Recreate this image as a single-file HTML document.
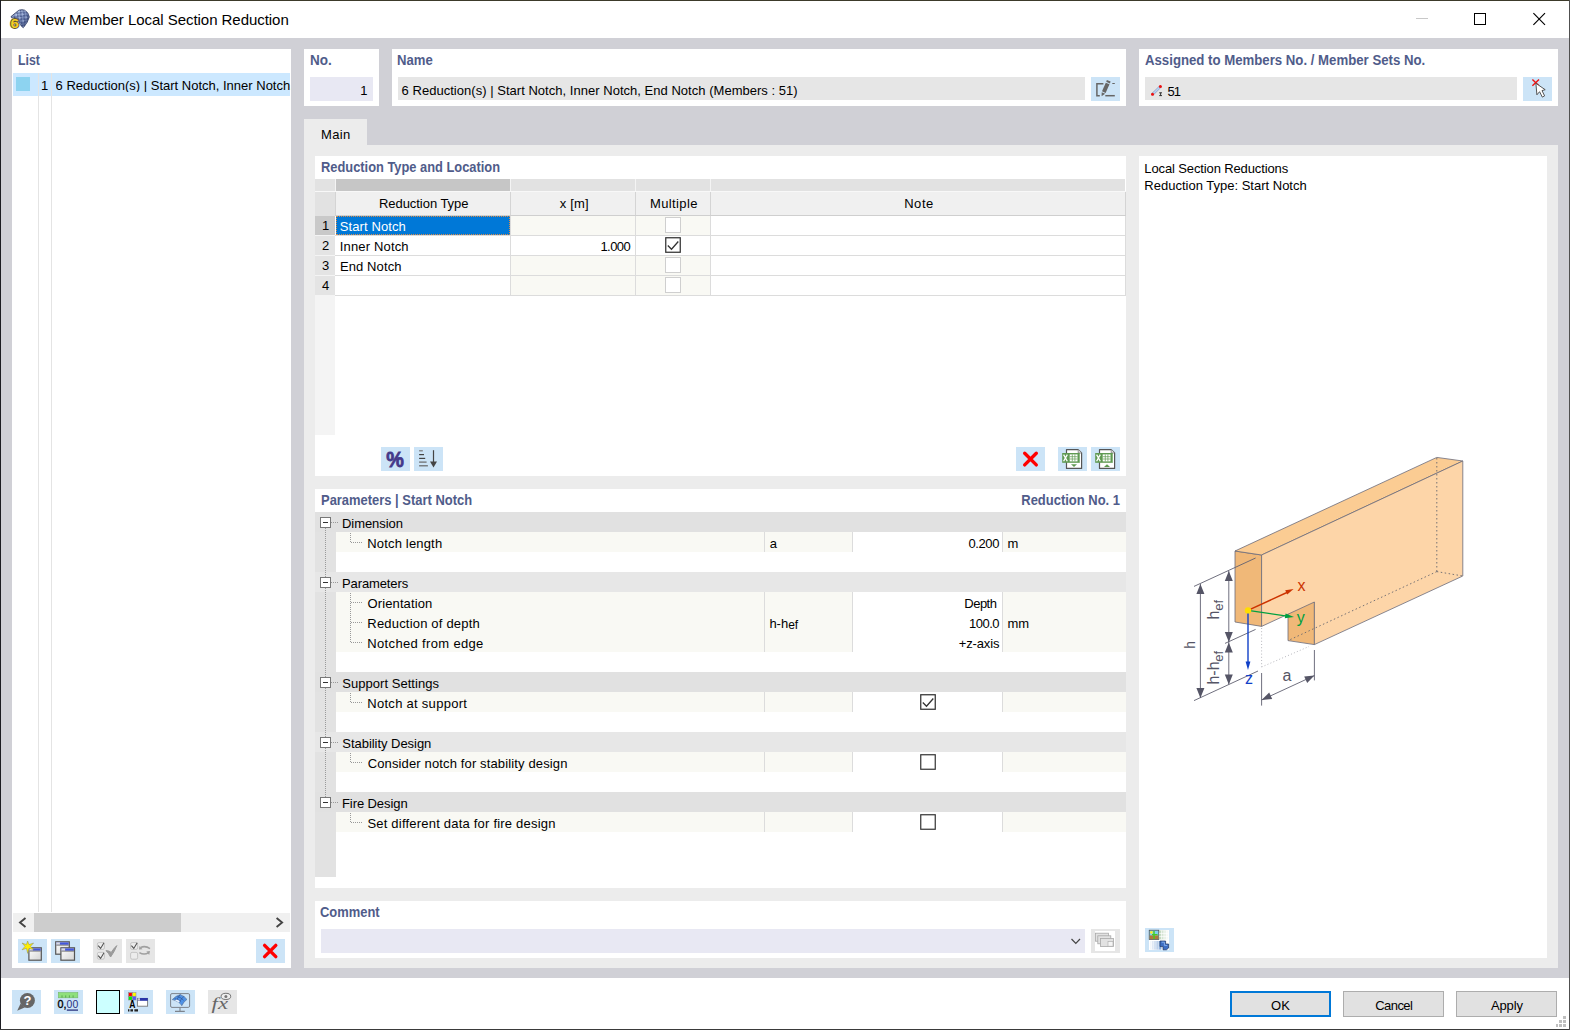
<!DOCTYPE html>
<html lang="en"><head><meta charset="utf-8"><title>New Member Local Section Reduction</title>
<style>
html,body{margin:0;padding:0;background:#fff;}
body{width:1570px;height:1030px;position:relative;overflow:hidden;font-family:"Liberation Sans", sans-serif;}
#w{position:absolute;left:0;top:0;width:1570px;height:1030px;overflow:hidden;}
#w>div,#w>svg,#w>span{position:absolute;}
.t{white-space:nowrap;line-height:1;display:block;}
svg text{font-family:"Liberation Sans", sans-serif;}
</style></head><body><div id="w">
<div style="left:0px;top:0px;width:1570px;height:1030px;background:#ffffff;"></div>
<div style="left:0px;top:38px;width:1570px;height:940px;background:#d0d0d6;"></div>
<div style="left:0px;top:0px;width:1570px;height:1px;background:#3c3a2a;"></div>
<div style="left:0px;top:0px;width:1px;height:1030px;background:#1c1c22;"></div>
<div style="left:0px;top:1029px;width:1570px;height:1px;background:#3a3a3a;"></div>
<div style="left:1569px;top:0px;width:1px;height:1030px;background:#505050;"></div>
<span id="title" class="t" style="top:12.30px;font-size:15px;font-weight:400;color:#000;letter-spacing:-0.044px;left:35.08px;"><span>New Member Local Section Reduction</span></span>
<div style="left:12px;top:49px;width:279px;height:919px;background:#fff;"></div>
<span id="list" class="t" style="top:53.15px;font-size:14px;font-weight:700;color:#505c8a;letter-spacing:0.000px;left:17.950000000000003px;transform:scaleX(0.8757);transform-origin:left center;"><span>List</span></span>
<div style="left:13px;top:73px;width:277px;height:23px;background:#cce8ff;"></div>
<div style="left:38px;top:73px;width:1px;height:839px;background:#e4e4e4;"></div>
<div style="left:51px;top:73px;width:1px;height:839px;background:#e4e4e4;"></div>
<div style="left:16px;top:77px;width:14px;height:14px;background:#8dd3f0;"></div>
<span id="l1" class="t" style="top:79.00px;font-size:13px;font-weight:400;color:#000;letter-spacing:0.000px;left:-351.9px;width:400.000px;text-align:right;"><span>1</span></span>
<span id="lrow" class="t" style="top:79.00px;font-size:13px;font-weight:400;color:#000;letter-spacing:0.000px;left:55.62px;width:235px;overflow:hidden;"><span>6 Reduction(s) | Start Notch, Inner Notch, End Notch (Members : 51)</span></span>
<div style="left:13px;top:913px;width:277px;height:19px;background:#f0f0f0;"></div>
<div style="left:34px;top:913px;width:147px;height:19px;background:#cdcdcd;"></div>
<svg style="left:13px;top:913px" width="277" height="19"><path d="M12.5 5 L7 9.5 L12.5 14 M263.6 5 L269.1 9.5 L263.6 14" fill="none" stroke="#444" stroke-width="1.9"/></svg>
<div style="left:304px;top:49px;width:75px;height:57px;background:#fff;"></div>
<span id="no" class="t" style="top:53.15px;font-size:14px;font-weight:700;color:#505c8a;letter-spacing:0.000px;left:309.69px;transform:scaleX(0.9646);transform-origin:left center;"><span>No.</span></span>
<div style="left:310px;top:77px;width:63px;height:24px;background:#e8e8f3;"></div>
<span id="no1" class="t" style="top:84.00px;font-size:13px;font-weight:400;color:#000;letter-spacing:0.000px;left:-32.610000000000014px;width:400.000px;text-align:right;"><span>1</span></span>
<div style="left:392px;top:49px;width:734px;height:57px;background:#fff;"></div>
<span id="name" class="t" style="top:53.15px;font-size:14px;font-weight:700;color:#505c8a;letter-spacing:0.000px;left:397.28000000000003px;transform:scaleX(0.9367);transform-origin:left center;"><span>Name</span></span>
<div style="left:398px;top:77px;width:687px;height:23px;background:#e6e6e6;"></div>
<span id="nrow" class="t" style="top:84.00px;font-size:13px;font-weight:400;color:#000;letter-spacing:0.027px;left:401.62px;"><span>6 Reduction(s) | Start Notch, Inner Notch, End Notch (Members : 51)</span></span>
<div style="left:1091px;top:77px;width:29px;height:24px;background:#cce4f7;"></div>
<div style="left:1139px;top:49px;width:419px;height:57px;background:#fff;"></div>
<span id="assigned" class="t" style="top:53.15px;font-size:14px;font-weight:700;color:#505c8a;letter-spacing:0.000px;left:1145.03px;transform:scaleX(0.9429);transform-origin:left center;"><span>Assigned to Members No. / Member Sets No.</span></span>
<div style="left:1145px;top:77px;width:372px;height:23px;background:#e6e6e6;"></div>
<span id="a51" class="t" style="top:84.50px;font-size:13px;font-weight:400;color:#000;letter-spacing:-1.000px;left:1167.47px;"><span>51</span></span>
<div style="left:1523px;top:77px;width:29px;height:24px;background:#cce4f7;"></div>
<div style="left:304px;top:119px;width:63px;height:26px;background:#ececec;"></div>
<span id="main" class="t" style="top:127.50px;font-size:13px;font-weight:400;color:#000;letter-spacing:0.316px;left:321.0px;"><span>Main</span></span>
<div style="left:304px;top:145px;width:1254px;height:823px;background:#ececec;"></div>
<div style="left:315px;top:156px;width:811px;height:320px;background:#fff;"></div>
<span id="rtl" class="t" style="top:160.15px;font-size:14px;font-weight:700;color:#505c8a;letter-spacing:0.000px;left:320.66px;transform:scaleX(0.9183);transform-origin:left center;"><span>Reduction Type and Location</span></span>
<div style="left:315px;top:179px;width:810px;height:12px;background:#e2e2e2;"></div>
<div style="left:336px;top:179px;width:174px;height:12px;background:#c6c6c6;"></div>
<div style="left:335px;top:179px;width:1px;height:12px;background:#f4f4f4;"></div>
<div style="left:510px;top:179px;width:1px;height:12px;background:#f4f4f4;"></div>
<div style="left:635px;top:179px;width:1px;height:12px;background:#f4f4f4;"></div>
<div style="left:710px;top:179px;width:1px;height:12px;background:#f4f4f4;"></div>
<div style="left:315px;top:191px;width:811px;height:25px;background:#f0f0f0;"></div>
<div style="left:315px;top:191px;width:20px;height:25px;background:#e2e2e2;"></div>
<div style="left:335px;top:191px;width:1px;height:25px;background:#d4d4d4;"></div>
<div style="left:510px;top:191px;width:1px;height:25px;background:#d4d4d4;"></div>
<div style="left:635px;top:191px;width:1px;height:25px;background:#d4d4d4;"></div>
<div style="left:710px;top:191px;width:1px;height:25px;background:#d4d4d4;"></div>
<div style="left:1125px;top:191px;width:1px;height:25px;background:#d4d4d4;"></div>
<div style="left:315px;top:191px;width:811px;height:1px;background:#f8f8f8;"></div>
<div style="left:335px;top:215px;width:791px;height:1px;background:#cfcfcf;"></div>
<span id="h1" class="t" style="top:197.00px;font-size:13px;font-weight:400;color:#000;letter-spacing:-0.053px;left:379.0px;"><span>Reduction Type</span></span>
<span id="h2" class="t" style="top:197.00px;font-size:13px;font-weight:400;color:#000;letter-spacing:0.190px;left:559.76px;"><span>x [m]</span></span>
<span id="h3" class="t" style="top:197.00px;font-size:13px;font-weight:400;color:#000;letter-spacing:0.373px;left:650.0px;"><span>Multiple</span></span>
<span id="h4" class="t" style="top:197.00px;font-size:13px;font-weight:400;color:#000;letter-spacing:0.536px;left:904.2px;"><span>Note</span></span>
<div style="left:315px;top:216px;width:20px;height:19px;background:#c9c9c9;"></div>
<div style="left:511px;top:216px;width:124px;height:19px;background:#f9f9f4;"></div>
<div style="left:636px;top:216px;width:74px;height:19px;background:#f9f9f4;"></div>
<div style="left:315px;top:235px;width:811px;height:1px;background:#dcdcdc;"></div>
<div style="left:315px;top:235px;width:20px;height:1px;background:#f4f4f4;"></div>
<span id="rn0" class="t" style="top:219.20px;font-size:13px;font-weight:400;color:#000;letter-spacing:0.000px;left:125.5px;width:400px;text-align:center;text-indent:0.000px;"><span>1</span></span>
<svg style="left:665px;top:217px" width="16" height="16"><rect x="0.5" y="0.5" width="15" height="15" fill="#fff" stroke="#cfcfcf" stroke-width="1"/></svg>
<div style="left:315px;top:236px;width:20px;height:19px;background:#e4e4e4;"></div>
<div style="left:636px;top:236px;width:74px;height:19px;background:#fff;"></div>
<div style="left:315px;top:255px;width:811px;height:1px;background:#dcdcdc;"></div>
<div style="left:315px;top:255px;width:20px;height:1px;background:#f4f4f4;"></div>
<span id="rn1" class="t" style="top:239.20px;font-size:13px;font-weight:400;color:#000;letter-spacing:0.000px;left:125.5px;width:400px;text-align:center;text-indent:0.000px;"><span>2</span></span>
<svg style="left:665px;top:237px" width="16" height="16"><rect x="0.75" y="0.75" width="14.5" height="14.5" fill="#fff" stroke="#333" stroke-width="1.25"/><path d="M2.8 8.5 L6.5 12.3 L13.3 4.5" fill="none" stroke="#333" stroke-width="1.3"/></svg>
<div style="left:315px;top:256px;width:20px;height:19px;background:#e4e4e4;"></div>
<div style="left:511px;top:256px;width:124px;height:19px;background:#f9f9f4;"></div>
<div style="left:636px;top:256px;width:74px;height:19px;background:#f9f9f4;"></div>
<div style="left:315px;top:275px;width:811px;height:1px;background:#dcdcdc;"></div>
<div style="left:315px;top:275px;width:20px;height:1px;background:#f4f4f4;"></div>
<span id="rn2" class="t" style="top:259.20px;font-size:13px;font-weight:400;color:#000;letter-spacing:0.000px;left:125.5px;width:400px;text-align:center;text-indent:0.000px;"><span>3</span></span>
<svg style="left:665px;top:257px" width="16" height="16"><rect x="0.5" y="0.5" width="15" height="15" fill="#fff" stroke="#cfcfcf" stroke-width="1"/></svg>
<div style="left:315px;top:276px;width:20px;height:19px;background:#e4e4e4;"></div>
<div style="left:511px;top:276px;width:124px;height:19px;background:#f9f9f4;"></div>
<div style="left:636px;top:276px;width:74px;height:19px;background:#f9f9f4;"></div>
<div style="left:315px;top:295px;width:811px;height:1px;background:#dcdcdc;"></div>
<div style="left:315px;top:295px;width:20px;height:1px;background:#f4f4f4;"></div>
<span id="rn3" class="t" style="top:279.20px;font-size:13px;font-weight:400;color:#000;letter-spacing:0.000px;left:125.5px;width:400px;text-align:center;text-indent:0.000px;"><span>4</span></span>
<svg style="left:665px;top:277px" width="16" height="16"><rect x="0.5" y="0.5" width="15" height="15" fill="#fff" stroke="#cfcfcf" stroke-width="1"/></svg>
<div style="left:315px;top:296px;width:20px;height:139px;background:#f4f4f4;"></div>
<div style="left:510px;top:216px;width:1px;height:80px;background:#dcdcdc;"></div>
<div style="left:635px;top:216px;width:1px;height:80px;background:#dcdcdc;"></div>
<div style="left:710px;top:216px;width:1px;height:80px;background:#dcdcdc;"></div>
<div style="left:1125px;top:216px;width:1px;height:80px;background:#dcdcdc;"></div>
<div style="left:336px;top:216px;width:174px;height:19px;background:#0078d7;outline:1px dotted #d98c4a;outline-offset:-1px;"></div>
<span id="r1" class="t" style="top:219.80px;font-size:13px;font-weight:400;color:#fff;letter-spacing:0.100px;left:339.76000000000005px;"><span>Start Notch</span></span>
<span id="r2" class="t" style="top:239.80px;font-size:13px;font-weight:400;color:#000;letter-spacing:0.164px;left:339.76000000000005px;"><span>Inner Notch</span></span>
<span id="r3" class="t" style="top:259.80px;font-size:13px;font-weight:400;color:#000;letter-spacing:0.114px;left:339.92px;"><span>End Notch</span></span>
<span id="v1000" class="t" style="top:239.50px;font-size:13px;font-weight:400;color:#000;letter-spacing:-0.550px;left:230.79999999999995px;width:399.450px;text-align:right;"><span>1.000</span></span>
<div style="left:381px;top:447px;width:29px;height:24px;background:#cce4f7;"></div>
<div style="left:414px;top:447px;width:29px;height:24px;background:#cce4f7;"></div>
<div style="left:1016px;top:447px;width:29px;height:24px;background:#cce4f7;"></div>
<div style="left:1058px;top:447px;width:29px;height:24px;background:#cce4f7;"></div>
<div style="left:1091px;top:447px;width:29px;height:24px;background:#cce4f7;"></div>
<div style="left:315px;top:489px;width:811px;height:399px;background:#fff;"></div>
<span id="params" class="t" style="top:493.15px;font-size:14px;font-weight:700;color:#505c8a;letter-spacing:0.000px;left:320.65000000000003px;transform:scaleX(0.9243);transform-origin:left center;"><span>Parameters | Start Notch</span></span>
<span id="redno" class="t" style="top:493.15px;font-size:14px;font-weight:700;color:#505c8a;letter-spacing:0.000px;left:720.3699999999999px;width:400.000px;text-align:right;transform:scaleX(0.9263);transform-origin:right center;"><span>Reduction No. 1</span></span>
<div style="left:315px;top:512px;width:21px;height:365px;background:#e2e2e2;"></div>
<div style="left:315px;top:512px;width:811px;height:20px;background:#e1e1e1;"></div>
<span id="g0" class="t" style="top:517.00px;font-size:13px;font-weight:400;color:#000;letter-spacing:-0.061px;left:342.0px;"><span>Dimension</span></span>
<div style="left:336px;top:532px;width:790px;height:20px;background:#f9f9f4;"></div>
<div style="left:853px;top:532px;width:149px;height:20px;background:#fff;"></div>
<div style="left:764px;top:532px;width:1px;height:20px;background:#dcdcdc;"></div>
<div style="left:852px;top:532px;width:1px;height:20px;background:#dcdcdc;"></div>
<div style="left:1002px;top:532px;width:1px;height:20px;background:#dcdcdc;"></div>
<span id="g0r0" class="t" style="top:537.00px;font-size:13px;font-weight:400;color:#000;letter-spacing:0.166px;left:367.31px;"><span>Notch length</span></span>
<span id="g0s0" class="t" style="top:537.00px;font-size:13px;font-weight:400;color:#000;letter-spacing:0.000px;left:769.74px;"><span>a</span></span>
<span id="g0v0" class="t" style="top:537.00px;font-size:13px;font-weight:400;color:#000;letter-spacing:-0.370px;left:599.47px;width:399.630px;text-align:right;"><span>0.200</span></span>
<span id="g0u0" class="t" style="top:537.00px;font-size:13px;font-weight:400;color:#000;letter-spacing:0.000px;left:1007.5px;"><span>m</span></span>
<div style="left:315px;top:572px;width:811px;height:20px;background:#e7e7e7;"></div>
<span id="g1" class="t" style="top:577.00px;font-size:13px;font-weight:400;color:#000;letter-spacing:-0.111px;left:342.0px;"><span>Parameters</span></span>
<div style="left:336px;top:592px;width:790px;height:20px;background:#f9f9f4;"></div>
<div style="left:853px;top:592px;width:149px;height:20px;background:#fff;"></div>
<div style="left:764px;top:592px;width:1px;height:20px;background:#dcdcdc;"></div>
<div style="left:852px;top:592px;width:1px;height:20px;background:#dcdcdc;"></div>
<div style="left:1002px;top:592px;width:1px;height:20px;background:#dcdcdc;"></div>
<span id="g1r0" class="t" style="top:597.00px;font-size:13px;font-weight:400;color:#000;letter-spacing:0.102px;left:367.6px;"><span>Orientation</span></span>
<span id="g1v0" class="t" style="top:597.00px;font-size:13px;font-weight:400;color:#000;letter-spacing:-0.531px;left:596.95px;width:399.469px;text-align:right;"><span>Depth</span></span>
<div style="left:336px;top:612px;width:790px;height:20px;background:#f9f9f4;"></div>
<div style="left:853px;top:612px;width:149px;height:20px;background:#fff;"></div>
<div style="left:764px;top:612px;width:1px;height:20px;background:#dcdcdc;"></div>
<div style="left:852px;top:612px;width:1px;height:20px;background:#dcdcdc;"></div>
<div style="left:1002px;top:612px;width:1px;height:20px;background:#dcdcdc;"></div>
<span id="g1r1" class="t" style="top:617.00px;font-size:13px;font-weight:400;color:#000;letter-spacing:0.191px;left:367.31px;"><span>Reduction of depth</span></span>
<span id="g1s1" class="t" style="top:617.00px;font-size:13px;font-weight:400;color:#000;letter-spacing:0.000px;left:769.38px;"><span>h-h<span style="font-size:12px;position:relative;top:1.3px">ef</span></span></span>
<span id="g1v1" class="t" style="top:617.00px;font-size:13px;font-weight:400;color:#000;letter-spacing:-0.550px;left:599.47px;width:399.450px;text-align:right;"><span>100.0</span></span>
<span id="g1u1" class="t" style="top:617.00px;font-size:13px;font-weight:400;color:#000;letter-spacing:0.000px;left:1007.5px;"><span>mm</span></span>
<div style="left:336px;top:632px;width:790px;height:20px;background:#f9f9f4;"></div>
<div style="left:853px;top:632px;width:149px;height:20px;background:#fff;"></div>
<div style="left:764px;top:632px;width:1px;height:20px;background:#dcdcdc;"></div>
<div style="left:852px;top:632px;width:1px;height:20px;background:#dcdcdc;"></div>
<div style="left:1002px;top:632px;width:1px;height:20px;background:#dcdcdc;"></div>
<span id="g1r2" class="t" style="top:637.00px;font-size:13px;font-weight:400;color:#000;letter-spacing:0.343px;left:367.31px;"><span>Notched from edge</span></span>
<span id="g1v2" class="t" style="top:637.00px;font-size:13px;font-weight:400;color:#000;letter-spacing:-0.134px;left:599.47px;width:399.866px;text-align:right;"><span>+z-axis</span></span>
<div style="left:315px;top:672px;width:811px;height:20px;background:#e1e1e1;"></div>
<span id="g2" class="t" style="top:677.00px;font-size:13px;font-weight:400;color:#000;letter-spacing:0.035px;left:342.31px;"><span>Support Settings</span></span>
<div style="left:336px;top:692px;width:790px;height:20px;background:#f9f9f4;"></div>
<div style="left:853px;top:692px;width:149px;height:20px;background:#fff;"></div>
<div style="left:764px;top:692px;width:1px;height:20px;background:#dcdcdc;"></div>
<div style="left:852px;top:692px;width:1px;height:20px;background:#dcdcdc;"></div>
<div style="left:1002px;top:692px;width:1px;height:20px;background:#dcdcdc;"></div>
<span id="g2r0" class="t" style="top:697.00px;font-size:13px;font-weight:400;color:#000;letter-spacing:0.280px;left:367.31px;"><span>Notch at support</span></span>
<svg style="left:920px;top:694px" width="16" height="16"><rect x="0.75" y="0.75" width="14.5" height="14.5" fill="#fff" stroke="#333" stroke-width="1.25"/><path d="M2.8 8.5 L6.5 12.3 L13.3 4.5" fill="none" stroke="#333" stroke-width="1.3"/></svg>
<div style="left:315px;top:732px;width:811px;height:20px;background:#e7e7e7;"></div>
<span id="g3" class="t" style="top:737.00px;font-size:13px;font-weight:400;color:#000;letter-spacing:-0.039px;left:342.31px;"><span>Stability Design</span></span>
<div style="left:336px;top:752px;width:790px;height:20px;background:#f9f9f4;"></div>
<div style="left:853px;top:752px;width:149px;height:20px;background:#fff;"></div>
<div style="left:764px;top:752px;width:1px;height:20px;background:#dcdcdc;"></div>
<div style="left:852px;top:752px;width:1px;height:20px;background:#dcdcdc;"></div>
<div style="left:1002px;top:752px;width:1px;height:20px;background:#dcdcdc;"></div>
<span id="g3r0" class="t" style="top:757.00px;font-size:13px;font-weight:400;color:#000;letter-spacing:0.136px;left:367.69px;"><span>Consider notch for stability design</span></span>
<svg style="left:920px;top:754px" width="16" height="16"><rect x="0.75" y="0.75" width="14.5" height="14.5" fill="#fff" stroke="#333" stroke-width="1.2"/></svg>
<div style="left:315px;top:792px;width:811px;height:20px;background:#e1e1e1;"></div>
<span id="g4" class="t" style="top:797.00px;font-size:13px;font-weight:400;color:#000;letter-spacing:-0.086px;left:342.0px;"><span>Fire Design</span></span>
<div style="left:336px;top:812px;width:790px;height:20px;background:#f9f9f4;"></div>
<div style="left:853px;top:812px;width:149px;height:20px;background:#fff;"></div>
<div style="left:764px;top:812px;width:1px;height:20px;background:#dcdcdc;"></div>
<div style="left:852px;top:812px;width:1px;height:20px;background:#dcdcdc;"></div>
<div style="left:1002px;top:812px;width:1px;height:20px;background:#dcdcdc;"></div>
<span id="g4r0" class="t" style="top:817.00px;font-size:13px;font-weight:400;color:#000;letter-spacing:0.210px;left:367.39px;"><span>Set different data for fire design</span></span>
<svg style="left:920px;top:814px" width="16" height="16"><rect x="0.75" y="0.75" width="14.5" height="14.5" fill="#fff" stroke="#333" stroke-width="1.2"/></svg>
<svg style="left:315px;top:512px" width="60" height="366" shape-rendering="crispEdges"><path d="M10.5 10 V290" stroke="#9a9a9a" stroke-width="1" stroke-dasharray="1 1" fill="none"/><path d="M16 10.5 H23" stroke="#9a9a9a" stroke-dasharray="1 1"/><rect x="5.5" y="5.5" width="10" height="10" fill="#fff" stroke="#777"/><path d="M8 10.5 H13" stroke="#333"/><path d="M35.5 20.5 V30.5" stroke="#9a9a9a" stroke-dasharray="1 1"/><path d="M36 30.5 H47" stroke="#9a9a9a" stroke-dasharray="1 1"/><path d="M16 70.5 H23" stroke="#9a9a9a" stroke-dasharray="1 1"/><rect x="5.5" y="65.5" width="10" height="10" fill="#fff" stroke="#777"/><path d="M8 70.5 H13" stroke="#333"/><path d="M35.5 80.5 V130.5" stroke="#9a9a9a" stroke-dasharray="1 1"/><path d="M36 90.5 H47" stroke="#9a9a9a" stroke-dasharray="1 1"/><path d="M36 110.5 H47" stroke="#9a9a9a" stroke-dasharray="1 1"/><path d="M36 130.5 H47" stroke="#9a9a9a" stroke-dasharray="1 1"/><path d="M16 170.5 H23" stroke="#9a9a9a" stroke-dasharray="1 1"/><rect x="5.5" y="165.5" width="10" height="10" fill="#fff" stroke="#777"/><path d="M8 170.5 H13" stroke="#333"/><path d="M35.5 180.5 V190.5" stroke="#9a9a9a" stroke-dasharray="1 1"/><path d="M36 190.5 H47" stroke="#9a9a9a" stroke-dasharray="1 1"/><path d="M16 230.5 H23" stroke="#9a9a9a" stroke-dasharray="1 1"/><rect x="5.5" y="225.5" width="10" height="10" fill="#fff" stroke="#777"/><path d="M8 230.5 H13" stroke="#333"/><path d="M35.5 240.5 V250.5" stroke="#9a9a9a" stroke-dasharray="1 1"/><path d="M36 250.5 H47" stroke="#9a9a9a" stroke-dasharray="1 1"/><path d="M16 290.5 H23" stroke="#9a9a9a" stroke-dasharray="1 1"/><rect x="5.5" y="285.5" width="10" height="10" fill="#fff" stroke="#777"/><path d="M8 290.5 H13" stroke="#333"/><path d="M35.5 300.5 V310.5" stroke="#9a9a9a" stroke-dasharray="1 1"/><path d="M36 310.5 H47" stroke="#9a9a9a" stroke-dasharray="1 1"/></svg>
<div style="left:315px;top:901px;width:811px;height:57px;background:#fff;"></div>
<span id="comment" class="t" style="top:905.15px;font-size:14px;font-weight:700;color:#505c8a;letter-spacing:0.000px;left:320.32px;transform:scaleX(0.9228);transform-origin:left center;"><span>Comment</span></span>
<div style="left:321px;top:929px;width:764px;height:24px;background:#e8e8f3;"></div>
<svg style="left:1069px;top:935px" width="14" height="12"><path d="M2.5 4 L6.8 8.5 L11 4" fill="none" stroke="#444" stroke-width="1.2"/></svg>
<div style="left:1091px;top:929px;width:29px;height:24px;background:#e6e6e6;"></div>
<div style="left:1139px;top:156px;width:408px;height:802px;background:#fff;"></div>
<span id="lsr" class="t" style="top:162.00px;font-size:13px;font-weight:400;color:#000;letter-spacing:-0.126px;left:1144.34px;"><span>Local Section Reductions</span></span>
<span id="rtsn" class="t" style="top:179.00px;font-size:13px;font-weight:400;color:#000;letter-spacing:0.001px;left:1144.34px;"><span>Reduction Type: Start Notch</span></span>
<div style="left:1145px;top:928px;width:29px;height:24px;background:#cce4f7;"></div>
<div style="left:18px;top:939px;width:29px;height:24px;background:#cce4f7;"></div>
<div style="left:51px;top:939px;width:29px;height:24px;background:#cce4f7;"></div>
<div style="left:256px;top:939px;width:29px;height:24px;background:#cce4f7;"></div>
<div style="left:93px;top:939px;width:29px;height:24px;background:#e6e6e6;"></div>
<div style="left:126px;top:939px;width:29px;height:24px;background:#e6e6e6;"></div>
<div style="left:12px;top:990px;width:29px;height:24px;background:#cce4f7;"></div>
<div style="left:54px;top:990px;width:29px;height:24px;background:#cce4f7;"></div>
<div style="left:124px;top:990px;width:29px;height:24px;background:#cce4f7;"></div>
<div style="left:166px;top:990px;width:29px;height:24px;background:#cce4f7;"></div>
<div style="left:208px;top:990px;width:29px;height:24px;background:#e6e6e6;"></div>
<div style="left:96px;top:990px;width:24px;height:24px;background:#ccffff;box-sizing:border-box;border:1px solid #000;"></div>
<div style="left:1230px;top:991px;width:101px;height:26px;background:#e1e1e1;box-sizing:border-box;border:2px solid #0078d7;"></div>
<div style="left:1343px;top:991px;width:101px;height:26px;background:#e1e1e1;box-sizing:border-box;border:1px solid #adadad;"></div>
<div style="left:1456px;top:991px;width:101px;height:26px;background:#e1e1e1;box-sizing:border-box;border:1px solid #adadad;"></div>
<span id="ok" class="t" style="top:999.00px;font-size:13px;font-weight:400;color:#000;letter-spacing:0.000px;left:1271.1100000000001px;"><span>OK</span></span>
<span id="cancel" class="t" style="top:999.00px;font-size:13px;font-weight:400;color:#000;letter-spacing:-0.550px;left:1375.1999999999998px;"><span>Cancel</span></span>
<span id="apply" class="t" style="top:999.00px;font-size:13px;font-weight:400;color:#000;letter-spacing:-0.146px;left:1491.0px;"><span>Apply</span></span>
<svg style="left:1139px;top:400px" width="408" height="340" viewBox="1139 400 408 340">
<g stroke-linejoin="round" stroke-linecap="butt">
<!-- notch face -->
<polygon points="1288,597.8 1314.4,602 1314.4,644.6 1288,640.6" fill="#f0b878" stroke="#6b6b7a" stroke-width="0.8"/>
<!-- end face -->
<polygon points="1235,551 1261.6,555 1261.6,626.4 1235,622" fill="#f0b878" stroke="#6b6b7a" stroke-width="0.8"/>
<!-- top face -->
<polygon points="1235,551 1436.8,457.4 1462.8,461 1261.6,555" fill="#fbcc93" stroke="#6b6b7a" stroke-width="0.8"/>
<!-- side face -->
<polygon points="1261.6,555 1462.8,461 1462.8,576 1314.4,644.6 1314.4,602 1261.6,626.4" fill="#fdd5a8" stroke="#6b6b7a" stroke-width="0.8"/>
<!-- hidden edges -->
<g fill="none" stroke="#66666e" stroke-width="0.9" stroke-dasharray="1.5 2.5">
<path d="M1436.8 458 V571.6"/>
<path d="M1436.8 571.6 L1462.8 576"/>
<path d="M1436.8 571.6 L1288 640.6"/>
</g>
<g fill="none" stroke="#a4a4ac" stroke-width="0.8" stroke-dasharray="1 2.2">
<path d="M1261.6 628 V667"/>
<path d="M1261.6 667 L1309 646.5"/>
</g>
</g>
<!-- dimension lines -->
<g stroke="#606070" stroke-width="0.9" fill="none">
<path d="M1255.6 558 L1194 586.4"/>
<path d="M1255.6 629.4 L1225 643.4"/>
<path d="M1258 671 L1194 700.6"/>
<path d="M1200.4 584 V698"/>
<path d="M1228.8 571 V684.4"/>
<path d="M1261.6 673 V705.6"/>
<path d="M1314.4 650 V680.4"/>
<path d="M1261.6 700 L1314.4 675.6"/>
</g>
<g fill="#555566" stroke="none">
<polygon points="1200.4,584 1196.4,594 1204.4,594"/>
<polygon points="1200.4,698 1196.4,688 1204.4,688"/>
<polygon points="1228.8,571 1224.8,581 1232.8,581"/>
<polygon points="1228.8,642 1224.8,632 1232.8,632"/>
<polygon points="1228.8,642.4 1224.8,652.4 1232.8,652.4"/>
<polygon points="1228.8,684.4 1224.8,674.4 1232.8,674.4"/>
<polygon points="1261.6,700 1269.2,692.6 1272.2,699"/>
<polygon points="1314.4,675.6 1304.2,676.5 1307.2,683"/>
</g>
<!-- axes -->
<path d="M1248 610.4 L1288 592" stroke="#cc3300" stroke-width="1.4" fill="none"/>
<polygon points="1293.6,589 1285.2,590.2 1287.2,594.6" fill="#cc3300"/>
<path d="M1248 610.4 L1287 616.1" stroke="#00a040" stroke-width="1.4" fill="none"/>
<polygon points="1294,617 1285.6,613.4 1284.8,618.2" fill="#00a040"/>
<path d="M1248 610.4 V663" stroke="#1040c8" stroke-width="1.4" fill="none"/>
<polygon points="1248,670 1245.6,661.6 1250.4,661.6" fill="#1040c8"/>
<circle cx="1248" cy="610.4" r="3.2" fill="#ffdd00"/>
<text x="1297.6" y="590.8" font-size="16" fill="#cc3300">x</text>
<text x="1296.8" y="623" font-size="16" fill="#00a040">y</text>
<text x="1245" y="683.6" font-size="16" fill="#1040c8">z</text>
<text x="1282.4" y="680.8" font-size="16" fill="#555566">a</text>
<text transform="translate(1195.4 648.8) rotate(-90)" font-size="13.8" fill="#555566">h</text>
<text transform="translate(1218.7 619.4) rotate(-90)" font-size="16" fill="#555566">h<tspan font-size="13" dy="4.2" dx="-0.3">ef</tspan></text>
<text transform="translate(1218.7 684.6) rotate(-90)" font-size="16" fill="#555566">h-h<tspan font-size="13" dy="4.2" dx="-0.3">ef</tspan></text>
</svg>

<svg style="left:0;top:0" width="1570" height="1030" viewBox="0 0 1570 1030">
<defs>
<linearGradient id="gShell" x1="0" y1="0" x2="1" y2="1"><stop offset="0" stop-color="#c2d0ec"/><stop offset="0.5" stop-color="#8497c2"/><stop offset="1" stop-color="#36436e"/></linearGradient>
<pattern id="pGrid" width="4.6" height="4.6" patternUnits="userSpaceOnUse" patternTransform="rotate(40)"><rect width="2.3" height="2.3" fill="#27376e" opacity="0.55"/><rect x="2.3" y="2.3" width="2.3" height="2.3" fill="#27376e" opacity="0.55"/><rect x="2.3" width="2.3" height="2.3" fill="#cfe0ff" opacity="0.35"/></pattern>
<linearGradient id="gWin" x1="0" y1="0" x2="1" y2="1"><stop offset="0" stop-color="#ffffff"/><stop offset="1" stop-color="#d4d4d4"/></linearGradient>
<linearGradient id="gFadeR" x1="0" y1="0" x2="1" y2="0"><stop offset="0" stop-color="#9fc39a"/><stop offset="1" stop-color="#ffffff"/></linearGradient>
<linearGradient id="gFadeB" x1="0" y1="0" x2="1" y2="0"><stop offset="0" stop-color="#ffffff"/><stop offset="1" stop-color="#5f8fd0"/></linearGradient>
</defs>

<!-- title icon -->
<g>
<path id="shellp" d="M11.1 16.5 L18.9 10.2 Q22 9.2 24.6 10.2 Q28.8 12.6 29.3 17 Q27.6 23 23.3 27.7 Q21 26.6 19.4 22.6 L18.4 18.4 L11.4 17.6 Z" fill="url(#gShell)" stroke="#3a4566" stroke-width="0.9"/>
<path d="M11.1 16.5 L18.9 10.2 Q22 9.2 24.6 10.2 Q28.8 12.6 29.3 17 Q27.6 23 23.3 27.7 Q21 26.6 19.4 22.6 L18.4 18.4 L11.4 17.6 Z" fill="url(#pGrid)"/>
<text x="10.5" y="28.3" font-size="13.4" font-weight="700" fill="#f4cf25" stroke="#5c5530" stroke-width="1.8" paint-order="stroke" stroke-linejoin="round" textLength="8.4" lengthAdjust="spacingAndGlyphs">6</text>
</g>

<!-- title bar controls -->
<path d="M1416 18.5 H1428" stroke="#c8c8c8" stroke-width="1"/>
<rect x="1474.5" y="13.5" width="11" height="11" fill="none" stroke="#000" stroke-width="1"/>
<path d="M1533.4 13.2 L1545 24.8 M1545 13.2 L1533.4 24.8" stroke="#000" stroke-width="1.15"/>

<!-- edit name button -->
<g stroke="#666" fill="none" stroke-width="1.5">
<path d="M1103.4 83.8 H1096.9 V95.7 H1099.8"/>
<path d="M1105.3 95.7 H1114.8"/>
<path d="M1112.3 83.5 H1114.8" stroke-width="1"/>
</g>
<g fill="#666">
<polygon points="1106.9,80 1110.6,81.6 1109.9,83.4 1106.2,81.8"/>
<polygon points="1105.8,82.7 1109.5,84.3 1105.6,92.9 1102,91.3"/>
<polygon points="1101.7,92.2 1105.2,93.8 1101.6,96.2"/>
</g>

<!-- member icon -->
<path d="M1152.6 94.2 L1160.3 86.6" stroke="#8c9cc0" stroke-width="2.6" stroke-linecap="round"/>
<path d="M1152.6 94.2 L1160.3 86.6" stroke="#b9d2f5" stroke-width="1.5" stroke-linecap="round"/>
<circle cx="1152.5" cy="94.3" r="1.5" fill="#ee1111"/><circle cx="1160.4" cy="86.5" r="1.5" fill="#ee1111"/>
<path d="M1159.2 92.8 H1162 M1160.6 92.8 V95.6 M1159.2 95.6 H1162" stroke="#222" stroke-width="0.9" fill="none"/>

<!-- select-in-graphic button -->
<path d="M1532.4 79.4 L1539 85.8 M1539 79.4 L1532.4 85.8" stroke="#ee1111" stroke-width="1.4"/>
<polygon points="1535.9,83.3 1536.9,94.8 1539.6,91.7 1542.3,97.1 1544.6,95.9 1542,90.6 1545.2,89.7" fill="#fff" stroke="#444" stroke-width="0.9" stroke-linejoin="round"/>

<!-- percent button -->
<text x="386.2" y="466.8" font-size="21.5" font-weight="700" fill="#45398a" stroke="#45398a" stroke-width="0.8" textLength="17.6" lengthAdjust="spacingAndGlyphs">%</text>
<!-- sort button -->
<g stroke="#444" stroke-width="1.2" fill="none">
<path d="M419.1 450.8 H422.8" stroke="#777"/><path d="M419.1 454.6 H424"/><path d="M419.1 458.4 H425.2"/><path d="M419.1 462.1 H426.6" stroke="#666"/><path d="M419.1 465.8 H427.9" stroke="#666"/>
<path d="M433.5 450.2 V463"/>
</g>
<polygon points="430,461.4 437,461.4 433.5,467.4" fill="#444"/>

<!-- red X buttons -->
<g stroke="#ff0000" stroke-width="3.4" stroke-linecap="round">
<path d="M1024.7 453.3 L1036.3 464.9 M1036.3 453.3 L1024.7 464.9"/>
<path d="M264.6 945.4 L275.8 956.6 M275.8 945.4 L264.6 956.6"/>
</g>

<!-- excel buttons -->
<g id="xl">
<path d="M1066.5 449.6 H1078.2 L1081.6 453 V468.4 H1066.5 Z" fill="#fff" stroke="#555" stroke-width="1.2" stroke-linejoin="round"/>
<path d="M1078.2 449.6 V453 H1081.6" fill="#ddd" stroke="#777" stroke-width="0.7"/>
<rect x="1062.2" y="453" width="17.6" height="9.8" fill="#5f9a52"/>
<rect x="1079" y="454" width="1" height="8" fill="#8db884"/>
<path d="M1063.6 454.6 L1067.3 461.2 M1067.3 454.6 L1063.6 461.2" stroke="#fff" stroke-width="1.3"/>
<rect x="1069.7" y="454.4" width="7.8" height="7" fill="#fff"/>
<path d="M1069.7 456.7 H1077.5 M1069.7 459 H1077.5 M1072.3 454.4 V461.4 M1074.9 454.4 V461.4" stroke="#5f9a52" stroke-width="0.7"/>
</g>
<polygon points="1071,464.2 1077,464.2 1074,467" fill="#5f9a52"/>
<use href="#xl" x="33"/>
<polygon points="1104,467 1110,467 1107,464.2" fill="#5f9a52"/>

<!-- list: new window -->
<g id="win">
<rect x="28.9" y="947.8" width="12.4" height="12.4" fill="url(#gWin)" stroke="#555" stroke-width="1.2"/>
<rect x="29.5" y="948.4" width="11.2" height="2.3" fill="#4357dd"/>
<rect x="29.5" y="948.4" width="3.4" height="2.3" fill="#ddd"/>
<path d="M29.5 951.1 H40.7" stroke="#666" stroke-width="0.8"/>
</g>
<polygon points="27.6,941 29,944.6 33.6,943 30.4,946.4 33.6,949.6 29,948.4 27.8,953.4 26.4,948.4 22,949.8 25,946.4 22,943 26.4,944.6" fill="#ffee00" stroke="#8a8a60" stroke-width="0.5"/>
<!-- list: copy windows -->
<g id="win2">
<rect x="55.7" y="941.8" width="13.6" height="12.4" fill="url(#gWin)" stroke="#555" stroke-width="1.2"/>
<rect x="56.3" y="942.4" width="12.4" height="2.4" fill="#4357dd"/>
<rect x="56.3" y="942.4" width="3.6" height="2.4" fill="#ddd"/>
<path d="M56.3 945.2 H68.7" stroke="#666" stroke-width="0.8"/>
</g>
<use href="#win2" x="5.2" y="6"/>

<!-- list: check all (disabled) -->
<g fill="#ececec" stroke="#bcbcbc" stroke-width="0.8">
<rect x="97.4" y="942.6" width="7" height="6.8" rx="1.5"/><rect x="97.4" y="952.4" width="7" height="6.8" rx="1.5"/>
<rect x="130.6" y="942.6" width="7" height="6.8" rx="1.5"/><rect x="130.6" y="952.4" width="7" height="6.8" rx="1.5"/>
</g>
<g fill="none" stroke="#505050" stroke-width="1.05">
<path d="M98.2 945.6 L100.6 948.4 L104 942.8"/><path d="M98.2 955.6 L100.6 958.4 L104 952.8"/>
<path d="M131.4 945.6 L133.8 948.4 L137.2 942.8"/>
</g>
<path d="M106 950.6 Q109.4 950.8 111.2 952.4 Q113.6 948.6 116.8 945.6 Q114.6 951.6 110.6 957 Q108.6 953 106 950.6 Z" fill="#9a9a9a" stroke="#9a9a9a" stroke-width="1" stroke-linejoin="round"/>
<path d="M150 948.6 Q145.6 945.4 140.6 947.4" fill="none" stroke="#a0a0a0" stroke-width="1.5"/>
<polygon points="139,949.6 139.4,946 142.6,949.2" fill="#a0a0a0"/>
<path d="M139.4 952.6 Q144 955.4 148.4 952.8" fill="none" stroke="#a0a0a0" stroke-width="1.5"/>
<polygon points="150,951 149.2,955 146.4,951.6" fill="#a0a0a0"/>

<!-- bottom: help -->
<circle cx="27.4" cy="1000.5" r="7.5" fill="#666"/>
<polygon points="20.6,1003.4 17.2,1010.8 24.6,1007.4" fill="#666"/>
<text x="27.4" y="1005.2" font-size="13" font-weight="700" fill="#fff" text-anchor="middle">?</text>
<!-- bottom: units -->
<rect x="58.4" y="992.6" width="19.4" height="5.2" fill="#8fe07c" stroke="#73b866" stroke-width="0.6"/>
<path d="M62 995.4 V997.6 M65.7 995.4 V997.6 M69.4 995.4 V997.6 M73.1 995.4 V997.6" stroke="#4e9a48" stroke-width="0.8"/>
<text x="57.6" y="1007.8" font-size="11.5" fill="#000" stroke="#000" stroke-width="0.35" textLength="9" lengthAdjust="spacingAndGlyphs">0,</text>
<text x="66.6" y="1007.8" font-size="11.5" fill="#27307e" textLength="11.6" lengthAdjust="spacingAndGlyphs">00</text>
<path d="M66.8 1010.1 H78" stroke="#27307e" stroke-width="1.3"/>
<!-- bottom: colors/A -->
<g stroke="#888" stroke-width="0.5">
<rect x="128.6" y="992.7" width="3.5" height="3.5" fill="#ff0000"/><rect x="132.5" y="992.7" width="3.5" height="3.5" fill="#ffff00"/>
<rect x="128.6" y="996.5" width="3.5" height="3.5" fill="#00ee00"/><rect x="132.5" y="996.5" width="3.5" height="3.5" fill="#5555ff"/>
</g>
<text x="129.3" y="1007.9" font-size="10.5" font-weight="700" fill="#000" textLength="6.2" lengthAdjust="spacingAndGlyphs">A</text>
<path d="M128 1010.3 H129.4 M130.4 1010.3 H133 M134.4 1010.3 H138" stroke="#222" stroke-width="2.2"/>
<rect x="137.4" y="998.4" width="10.2" height="7.8" fill="#fff" stroke="#777" stroke-width="0.9"/>
<rect x="137.4" y="998" width="10.4" height="2.8" fill="#2a35a8"/>
<rect x="137.6" y="998.2" width="2.4" height="2.4" fill="#ccc"/>
<!-- bottom: monitor -->
<rect x="170.6" y="993.6" width="19" height="13.8" rx="1.4" fill="none" stroke="#7d838c" stroke-width="1"/>
<path d="M180 1007.6 V1011 M175 1011.4 H184.8" stroke="#7d838c" stroke-width="1.1"/>
<path d="M172.2 999.6 Q176 995.6 180.2 994.6 Q184.6 996 187 999.4 Q183.4 1001.8 181.8 1005.8 Q179.6 1001.4 172.2 999.6 Z" fill="#4f92e6" stroke="#55657f" stroke-width="0.5"/>
<path d="M174.6 998.6 Q178 999 180.6 1001.6 M177.4 996.6 Q181.4 997.4 183.6 1000.4 M176.2 1000.6 Q178.2 997.2 180.2 994.6 M179.4 1002 Q181.6 998.4 184 996.2" stroke="#2a4c8c" stroke-width="0.6" fill="none"/>
<path d="M176.6 999.4 Q178.6 999.8 180 1001.2 L178.4 1002.6 Q177 1001 175 1000.6 Z" fill="#e8f2ff"/>
<!-- bottom: fx -->
<text x="211.6" y="1009.4" font-size="17" font-style="italic" fill="#666" style="font-family:'Liberation Serif',serif" textLength="16.4" lengthAdjust="spacingAndGlyphs">fx</text>
<ellipse cx="225.9" cy="996.4" rx="4.8" ry="3.1" fill="#eee" stroke="#666" stroke-width="0.9"/>
<circle cx="225.9" cy="996.4" r="1.5" fill="#777"/>

<!-- comment button (disabled) -->
<rect x="1095" y="931" width="20" height="20" fill="#fff"/>
<g fill="#e2e2e2" stroke="#a8a8a8" stroke-width="0.8">
<rect x="1095.4" y="933.2" width="13" height="8"/><rect x="1097.8" y="935.8" width="13" height="8"/><rect x="1100.4" y="938.4" width="13" height="8"/>
</g>
<rect x="1108" y="941.6" width="5" height="4.6" fill="#f4f4f4" stroke="#aaa" stroke-width="0.6"/>

<!-- image panel button -->
<rect x="1149" y="930" width="20" height="20" fill="#fff"/>
<rect x="1149.2" y="930.2" width="9.6" height="9.4" fill="#7fd0f0" stroke="#444" stroke-width="0.7"/>
<rect x="1149.6" y="935.4" width="8.8" height="3.8" fill="#b07a3c"/>
<path d="M1154 931 V939 M1152 934.6 H1157.6" stroke="#44cc22" stroke-width="1.4"/>
<circle cx="1151.4" cy="932.4" r="1.3" fill="#ffee22"/>
<rect x="1159.2" y="930.4" width="9.6" height="9" fill="url(#gFadeR)" opacity="0.7"/>
<path d="M1161.6 930.4 V939.4 M1164 930.4 V939.4 M1166.4 930.4 V939.4 M1159.2 933.4 H1168.8 M1159.2 936.4 H1168.8" stroke="#fff" stroke-width="0.7"/>
<rect x="1149.4" y="941" width="12" height="8.6" fill="url(#gFadeB)" opacity="0.8"/>
<path d="M1151.6 941 V949.6 M1153.8 941 V949.6 M1156 941 V949.6 M1158.2 941 V949.6" stroke="#fff" stroke-width="0.7"/>
<path d="M1160 941 H1165.6 V944 H1168.6 V948 L1166.4 949.8 H1163 V946.6 H1160 Z" fill="#3f6fc4" stroke="#1d3360" stroke-width="0.7"/>
<path d="M1161.6 942.2 H1164.4 V945.4 H1167.2" stroke="#8db4ee" stroke-width="0.9" fill="none"/>

<!-- resize grip -->
<g fill="#bfbfbf">
<rect x="1563" y="1016" width="3" height="3"/>
<rect x="1559" y="1020" width="3" height="3"/><rect x="1563" y="1020" width="3" height="3"/>
<rect x="1556" y="1024" width="2" height="3"/><rect x="1559" y="1024" width="3" height="3"/><rect x="1563" y="1024" width="3" height="3"/>
</g>
</svg>

</div></body></html>
